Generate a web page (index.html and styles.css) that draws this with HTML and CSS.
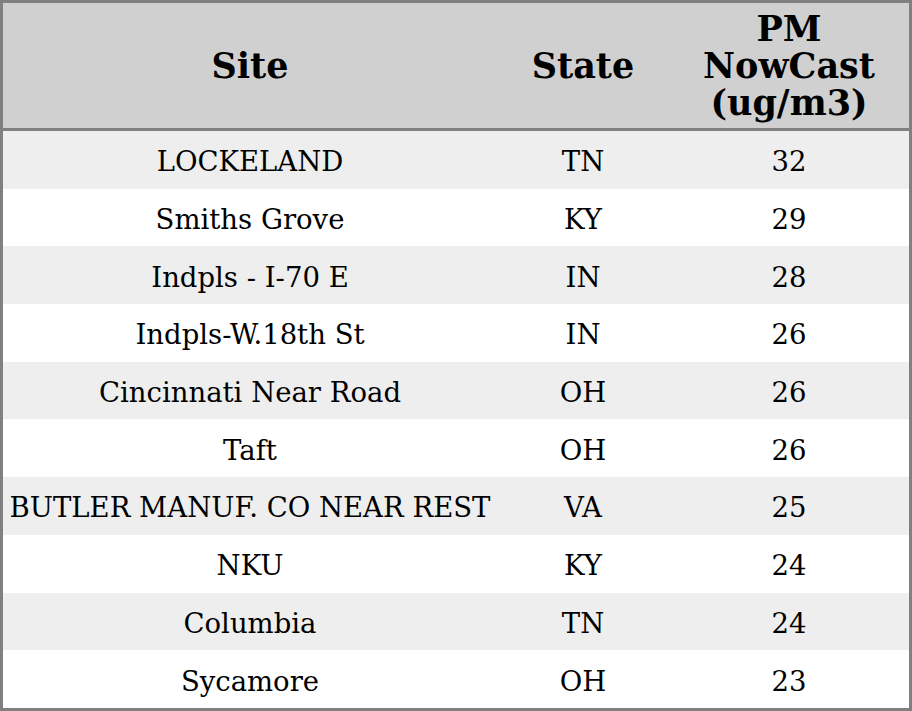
FILE: index.html
```html
<!DOCTYPE html>
<html>
<head>
<meta charset="utf-8">
<link rel="stylesheet" href="styles.css">
</head>
<body>
<table class="aq">
  <thead>
    <tr>
      <th class="c-site">Site</th>
      <th class="c-state">State</th>
      <th class="c-pm">PM<br>NowCast<br>(ug/m3)</th>
    </tr>
  </thead>
  <tbody>
    <tr><td>LOCKELAND</td><td>TN</td><td>32</td></tr>
    <tr><td>Smiths Grove</td><td>KY</td><td>29</td></tr>
    <tr><td>Indpls - I-70 E</td><td>IN</td><td>28</td></tr>
    <tr><td>Indpls-W.18th St</td><td>IN</td><td>26</td></tr>
    <tr><td>Cincinnati Near Road</td><td>OH</td><td>26</td></tr>
    <tr><td>Taft</td><td>OH</td><td>26</td></tr>
    <tr><td>BUTLER MANUF. CO NEAR REST</td><td>VA</td><td>25</td></tr>
    <tr><td>NKU</td><td>KY</td><td>24</td></tr>
    <tr><td>Columbia</td><td>TN</td><td>24</td></tr>
    <tr><td>Sycamore</td><td>OH</td><td>23</td></tr>
  </tbody>
</table>
</body>
</html>
```
FILE: styles.css
```css
html, body {
  margin: 0;
  padding: 0;
  background: #ffffff;
}
.aq {
  width: 912px;
  border-collapse: collapse;
  border: 3px solid #808080;
  font-family: "DejaVu Serif", serif;
  color: #000;
  table-layout: fixed;
}
.aq th {
  background: #d0d0d0;
  font-size: 35px;
  font-weight: bold;
  line-height: 37px;
  height: 125px;
  padding: 0 4px;
  border-bottom: 3px solid #808080;
  text-align: center;
  vertical-align: middle;
}
.c-site { width: 486px; }
.c-state { width: 164px; }
.aq td {
  font-size: 27.5px;
  text-align: center;
  vertical-align: middle;
  padding: 3px 4px 0;
  height: 54.7px;
  white-space: nowrap;
}
.aq tbody tr:nth-child(odd) td {
  background: #eeeeee;
}
```
